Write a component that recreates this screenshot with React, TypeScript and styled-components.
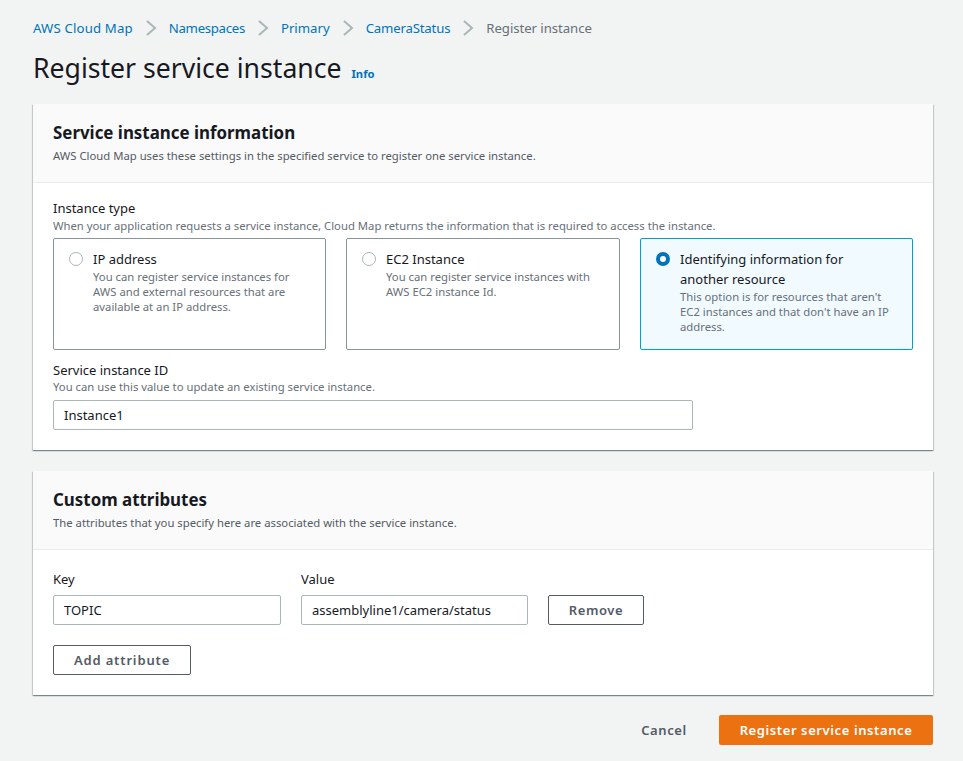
import { createGlobalStyle, styled } from "styled-components";

const Global = createGlobalStyle`
  html, body {
    margin: 0;
    padding: 0;
    background: #f2f3f3;
  }
  body {
    font-family: "Noto Sans", "Liberation Sans", sans-serif;
    font-size: 14px;
    line-height: 20px;
    color: #16191f;
  }
`;

const Page = styled.div`
  width: 963px;
  height: 761px;
  box-sizing: border-box;
  padding: 18px 30px 0 33px;
  overflow: hidden;
`;

const Crumbs = styled.nav`
  display: flex;
  align-items: center;
  height: 20px;
  font-size: 13.2px;
`;

const CrumbLink = styled.a<{ $spacing?: number }>`
  color: #0073bb;
  letter-spacing: ${({ $spacing }) => $spacing ?? 0}px;
`;

const CrumbCurrent = styled.span`
  color: #687078;
  letter-spacing: -0.06px;
`;

const Chevron = styled.svg`
  width: 12px;
  height: 16px;
  margin: 0 12px;
  fill: none;
  stroke: #aab7b8;
  stroke-width: 2;
`;

const TitleRow = styled.div`
  display: flex;
  align-items: baseline;
  margin: 12px 0 18px;
  height: 36px;
`;

const Title = styled.h1`
  margin: 0;
  font-size: 26.6px;
  line-height: 36px;
  font-weight: 400;
`;

const InfoLink = styled.a`
  margin-left: 10px;
  font-size: 11.2px;
  font-weight: 700;
  color: #0073bb;
`;

const Card = styled.section`
  background: #fff;
  box-shadow: 0 1px 1px 0 rgba(0, 28, 36, 0.3), 1px 1px 1px 0 rgba(0, 28, 36, 0.15),
    -1px 1px 1px 0 rgba(0, 28, 36, 0.15);
  margin-bottom: 20px;
`;

const SpacedCard = styled(Card)`
  margin-bottom: 20px;
  margin-top: 21px;
`;

const CardHeader = styled.header`
  background: #fafafa;
  border-bottom: 1px solid #eaeded;
  padding: 19px 20px 0;
  box-sizing: border-box;
  height: 79px;
`;

const CardTitle = styled.h2`
  margin: 0;
  font-size: 16.9px;
  line-height: 20px;
  font-weight: 700;
`;

const Description = styled.p`
  margin: 5px 0 0;
  font-size: 11.3px;
  line-height: 16px;
  color: #545b64;
`;

const CardBody = styled.div<{ $top: number }>`
  padding: ${({ $top }) => $top}px 20px 20px;
`;

const Label = styled.div`
  font-size: 13px;
  line-height: 18px;
`;

const TypeLabel = styled(Label)`
  margin-bottom: 1px;
`;

const Hint = styled.div`
  font-size: 11.3px;
  line-height: 16px;
  color: #687078;
`;

const Tiles = styled.div`
  display: grid;
  grid-template-columns: 273px 274px 273px;
  gap: 20px;
  margin-top: 4px;
`;

const Tile = styled.div<{ $selected?: boolean }>`
  box-sizing: border-box;
  height: 112px;
  display: flex;
  padding: 10px 20px 10px 15px;
  gap: 10px;
  border: 1px solid ${({ $selected }) => ($selected ? "#00a1c9" : "#879596")};
  border-radius: 2px;
  background: ${({ $selected }) => ($selected ? "#f1faff" : "#fff")};
`;

const Radio = styled.span<{ $checked?: boolean }>`
  flex: none;
  box-sizing: border-box;
  width: 14px;
  height: 14px;
  margin-top: 3px;
  border-radius: 50%;
  background: #fff;
  border: ${({ $checked }) => ($checked ? "4px solid #0073bb" : "1px solid #aab7b8")};
`;

const TileText = styled.div`
  min-width: 0;
`;

const TileTitle = styled.div`
  font-size: 13px;
  line-height: 20px;
`;

const TileDescription = styled.div`
  font-size: 11.3px;
  line-height: 15px;
  color: #687078;
`;

const Field = styled.div`
  margin-top: 11px;
`;

const TextInput = styled.input<{ $width: number }>`
  display: block;
  box-sizing: border-box;
  width: ${({ $width }) => $width}px;
  height: 30px;
  padding: 0 10px;
  border: 1px solid #aab7b8;
  border-radius: 2px;
  background: #fff;
  color: #16191f;
  font: 400 13px "Noto Sans", "Liberation Sans", sans-serif;
  outline: none;
`;

const FieldInput = styled(TextInput)`
  margin-top: 5px;
`;

const AttributeRow = styled.div`
  display: flex;
  align-items: flex-end;
  gap: 20px;
`;

const AttributeField = styled.div`
  display: flex;
  flex-direction: column;
  gap: 7px;
`;

const Button = styled.button<{ $width: number }>`
  box-sizing: border-box;
  width: ${({ $width }) => $width}px;
  height: 30px;
  padding: 0;
  border: 1px solid #545b64;
  border-radius: 2px;
  background: #fff;
  color: #545b64;
  font: 600 13px "Noto Sans", "Liberation Sans", sans-serif;
  letter-spacing: 0.6px;
`;

const AddButton = styled(Button)`
  display: block;
  margin-top: 20px;
  letter-spacing: 0.85px;
`;

const Footer = styled.div`
  display: flex;
  justify-content: flex-end;
  align-items: center;
`;

const CancelButton = styled(Button)`
  border: none;
  background: none;
  margin-right: 16px;
`;

const PrimaryButton = styled(Button)`
  border: none;
  background: #ec7211;
  color: #fff;
`;

const Sep = () => (
  <Chevron viewBox="0 0 12 16">
    <path d="M2 1l8 7-8 7" />
  </Chevron>
);

export default function App() {
  return (
    <Page>
      <Global />
      <Crumbs>
        <CrumbLink $spacing={0.16}>AWS Cloud Map</CrumbLink>
        <Sep />
        <CrumbLink $spacing={-0.3}>Namespaces</CrumbLink>
        <Sep />
        <CrumbLink>Primary</CrumbLink>
        <Sep />
        <CrumbLink $spacing={-0.17}>CameraStatus</CrumbLink>
        <Sep />
        <CrumbCurrent>Register instance</CrumbCurrent>
      </Crumbs>
      <TitleRow>
        <Title>Register service instance</Title>
        <InfoLink>Info</InfoLink>
      </TitleRow>
      <Card>
        <CardHeader>
          <CardTitle>Service instance information</CardTitle>
          <Description>
            AWS Cloud Map uses these settings in the specified service to register one service
            instance.
          </Description>
        </CardHeader>
        <CardBody $top={16}>
          <TypeLabel>Instance type</TypeLabel>
          <Hint>
            When your application requests a service instance, Cloud Map returns the information
            that is required to access the instance.
          </Hint>
          <Tiles>
            <Tile>
              <Radio />
              <TileText>
                <TileTitle>IP address</TileTitle>
                <TileDescription>
                  You can register service instances for AWS and external resources that are
                  available at an IP address.
                </TileDescription>
              </TileText>
            </Tile>
            <Tile>
              <Radio />
              <TileText>
                <TileTitle>EC2 Instance</TileTitle>
                <TileDescription>
                  You can register service instances with AWS EC2 instance Id.
                </TileDescription>
              </TileText>
            </Tile>
            <Tile $selected>
              <Radio $checked />
              <TileText>
                <TileTitle>Identifying information for another resource</TileTitle>
                <TileDescription>
                  This option is for resources that aren't EC2 instances and that don't have an IP
                  address.
                </TileDescription>
              </TileText>
            </Tile>
          </Tiles>
          <Field>
            <Label>Service instance ID</Label>
            <Hint>You can use this value to update an existing service instance.</Hint>
            <FieldInput $width={640} defaultValue="Instance1" />
          </Field>
        </CardBody>
      </Card>
      <SpacedCard>
        <CardHeader>
          <CardTitle>Custom attributes</CardTitle>
          <Description>
            The attributes that you specify here are associated with the service instance.
          </Description>
        </CardHeader>
        <CardBody $top={20}>
          <AttributeRow>
            <AttributeField>
              <Label>Key</Label>
              <TextInput $width={228} defaultValue="TOPIC" />
            </AttributeField>
            <AttributeField>
              <Label>Value</Label>
              <TextInput $width={227} defaultValue="assemblyline1/camera/status" />
            </AttributeField>
            <Button $width={96}>Remove</Button>
          </AttributeRow>
          <AddButton $width={138}>Add attribute</AddButton>
        </CardBody>
      </SpacedCard>
      <Footer>
        <CancelButton $width={78}>Cancel</CancelButton>
        <PrimaryButton $width={214}>Register service instance</PrimaryButton>
      </Footer>
    </Page>
  );
}
